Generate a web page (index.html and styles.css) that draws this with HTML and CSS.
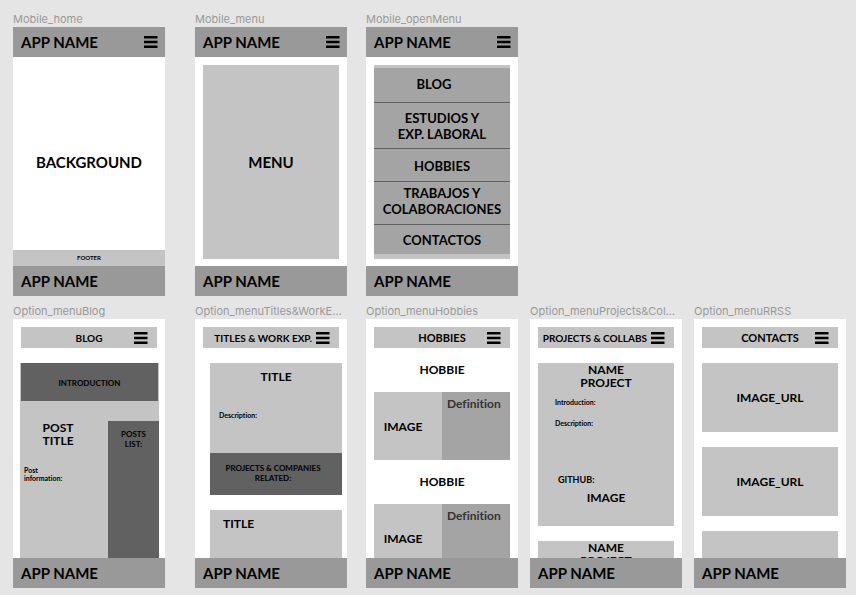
FILE: index.html
```html
<!DOCTYPE html>
<html lang="es">
<head>
<meta charset="utf-8">
<meta name="viewport" content="width=device-width, initial-scale=1">
<title>Mobile wireframes</title>
<link rel="stylesheet" href="styles.css">
</head>
<body>
<svg class="defs" aria-hidden="true">
  <symbol id="burger" viewBox="0 0 14 12"><path d="M0 0h13.5v2.4H0zM0 4.8h13.5v2.4H0zM0 9.6h13.5v2.4H0z"/></symbol>
</svg>
<main class="board">
  <section class="frame col-1">
    <h2 class="label">Mobile_home</h2>
    <div class="screen">
      <header class="app-bar"><span>APP NAME</span><button class="burger" aria-label="Menu"><svg><use href="#burger"/></svg></button></header>
      <div class="body home"><p class="text-xl">BACKGROUND</p></div>
      <div class="strip">FOOTER</div>
      <footer class="app-bar">APP NAME</footer>
    </div>
  </section>

  <section class="frame col-2">
    <h2 class="label">Mobile_menu</h2>
    <div class="screen">
      <header class="app-bar"><span>APP NAME</span><button class="burger" aria-label="Menu"><svg><use href="#burger"/></svg></button></header>
      <div class="body inset"><div class="panel center text-xl">MENU</div></div>
      <footer class="app-bar">APP NAME</footer>
    </div>
  </section>

  <section class="frame col-3">
    <h2 class="label">Mobile_openMenu</h2>
    <div class="screen">
      <header class="app-bar"><span>APP NAME</span><button class="burger" aria-label="Menu"><svg><use href="#burger"/></svg></button></header>
      <div class="body inset">
        <nav class="panel menu">
          <a class="blog" href="#blog">BLOG</a>
          <a class="studies" href="#titles">ESTUDIOS Y<br>EXP. LABORAL</a>
          <a class="hobbies" href="#hobbies">HOBBIES</a>
          <a class="works" href="#projects">TRABAJOS Y<br>COLABORACIONES</a>
          <a class="contacts" href="#contacts">CONTACTOS</a>
        </nav>
      </div>
      <footer class="app-bar">APP NAME</footer>
    </div>
  </section>

  <section class="frame col-1" id="blog">
    <h2 class="label">Option_menuBlog</h2>
    <div class="screen">
      <header class="title-bar"><h3 class="text-s">BLOG</h3><button class="burger" aria-label="Menu"><svg><use href="#burger"/></svg></button></header>
      <div class="body blog-body">
        <div class="intro text-xs">INTRODUCTION</div>
        <div class="blog-columns">
          <article class="post">
            <h4 class="text-m">POST<br>TITLE</h4>
            <p class="text-xxs">Post<br>information:</p>
          </article>
          <aside class="posts text-xs">POSTS<br>LIST:</aside>
        </div>
      </div>
      <footer class="app-bar">APP NAME</footer>
    </div>
  </section>

  <section class="frame col-2" id="titles">
    <h2 class="label">Option_menuTitles&amp;WorkExp</h2>
    <div class="screen">
      <header class="title-bar"><h3 class="text-s">TITLES &amp; WORK EXP.</h3><button class="burger" aria-label="Menu"><svg><use href="#burger"/></svg></button></header>
      <div class="body titles-body">
        <article class="title-card">
          <h4 class="text-m">TITLE</h4>
          <p class="text-xxs">Description:</p>
          <div class="related text-xs">PROJECTS &amp; COMPANIES<br>RELATED:</div>
        </article>
        <article class="title-card next"><h4 class="text-m">TITLE</h4></article>
      </div>
      <footer class="app-bar">APP NAME</footer>
    </div>
  </section>

  <section class="frame col-3" id="hobbies">
    <h2 class="label">Option_menuHobbies</h2>
    <div class="screen">
      <header class="title-bar"><h3 class="text-sm">HOBBIES</h3><button class="burger" aria-label="Menu"><svg><use href="#burger"/></svg></button></header>
      <div class="body hobbies-body">
        <h4 class="hobby-name text-m">HOBBIE</h4>
        <div class="hobby text-m"><div class="image">IMAGE</div><p class="definition">Definition</p></div>
        <h4 class="hobby-name text-m">HOBBIE</h4>
        <div class="hobby text-m"><div class="image">IMAGE</div><p class="definition">Definition</p></div>
      </div>
      <footer class="app-bar">APP NAME</footer>
    </div>
  </section>

  <section class="frame col-4" id="projects">
    <h2 class="label">Option_menuProjects&amp;Collabs</h2>
    <div class="screen">
      <header class="title-bar"><h3 class="text-s">PROJECTS &amp; COLLABS</h3><button class="burger" aria-label="Menu"><svg><use href="#burger"/></svg></button></header>
      <div class="body cards">
        <article class="project">
          <h4 class="text-m">NAME<br>PROJECT</h4>
          <p class="text-xxs">Introduction:</p>
          <p class="text-xxs">Description:</p>
          <p class="github">GITHUB:</p>
          <div class="project-image text-m">IMAGE</div>
        </article>
        <article class="project"><h4 class="text-m">NAME<br>PROJECT</h4></article>
      </div>
      <footer class="app-bar">APP NAME</footer>
    </div>
  </section>

  <section class="frame col-5" id="contacts">
    <h2 class="label">Option_menuRRSS</h2>
    <div class="screen">
      <header class="title-bar"><h3 class="text-sm">CONTACTS</h3><button class="burger" aria-label="Menu"><svg><use href="#burger"/></svg></button></header>
      <div class="body cards">
        <div class="contact text-m">IMAGE_URL</div>
        <div class="contact text-m">IMAGE_URL</div>
        <div class="contact"></div>
      </div>
      <footer class="app-bar">APP NAME</footer>
    </div>
  </section>
</main>
</body>
</html>
```
FILE: styles.css
```css
* { box-sizing: border-box; }

body {
  margin: 0;
  background: #e5e5e5;
  color: #000;
  font-family: Lato, "Liberation Sans", sans-serif;
  font-weight: 700;
  font-variant-ligatures: none;
}

h2, h3, h4, p { margin: 0; font-weight: inherit; }

.defs { display: none; }

/* Type scale */
.text-xl { font-size: 15px; line-height: 20px; }
.text-m { font-size: 12px; line-height: 13px; }
.text-sm { font-size: 11px; line-height: 14px; }
.text-s { font-size: 10px; line-height: 14px; }
.text-xs { font-size: 8px; line-height: 10px; }
.text-xxs { font-size: 7px; line-height: 8px; }

/* Board */
.board {
  display: grid;
  grid-template-columns: 152fr 30fr 152fr 19fr 152fr 12fr 152fr 12fr 152fr;
  row-gap: 7px;
  padding: 11px 10px 7px 13px;
}
.frame { min-width: 0; }
.col-1 { grid-column: 1; }
.col-2 { grid-column: 3; }
.col-3 { grid-column: 5; }
.col-4 { grid-column: 7; }
.col-5 { grid-column: 9; }

.label {
  overflow: hidden;
  padding-right: 5px;
  color: #999;
  font: 400 11px/16px Inter, sans-serif;
  text-overflow: ellipsis;
  white-space: nowrap;
}

.screen {
  display: flex;
  flex-direction: column;
  aspect-ratio: 152 / 269;
  overflow: hidden;
  background: #fff;
}
.body { flex: 1; min-height: 0; overflow: hidden; }

.app-bar {
  display: flex;
  flex: none;
  align-items: center;
  justify-content: space-between;
  height: 30px;
  padding: 0 7px 0 8px;
  background: #999;
  font-size: 15px;
  line-height: 20px;
}

.burger {
  display: block;
  width: 14px;
  height: 12px;
  padding: 0;
  border: 0;
  background: none;
}
.burger svg { display: block; width: 14px; height: 12px; }

.title-bar {
  display: grid;
  flex: none;
  grid-template-columns: minmax(0, 1fr) auto minmax(27px, 1fr);
  align-items: center;
  height: 21px;
  margin: 8px 8px 15px;
  background: #c4c4c4;
  white-space: nowrap;
}
.title-bar h3 { grid-column: 2; }
.title-bar .burger { justify-self: end; margin-right: 9px; }

/* Home and menu */
.home {
  display: grid;
  place-items: center;
  padding-top: 16px;
}
.strip {
  flex: none;
  height: 16px;
  background: #c4c4c4;
  font-size: 6px;
  line-height: 16px;
  text-align: center;
}
.inset { display: grid; padding: 8px 8px 7px; }
.panel { background: #c4c4c4; }
.center { display: grid; place-items: center; }

.menu {
  display: grid;
  grid-template-rows: 35fr 46fr 33fr 43fr 29fr;
  padding: 3px 0 5px;
  font-size: 13px;
  line-height: 16px;
}
.menu a {
  display: grid;
  place-items: center;
  border-bottom: 1px solid #616161;
  background: #a4a4a4;
  color: inherit;
  text-align: center;
  text-decoration: none;
}
.menu a:last-child { border-bottom: 0; }
.menu .blog { padding: 0 16px 2px 0; }
.menu .hobbies { padding-top: 2px; }
.menu .works { padding-bottom: 4px; }

/* Blog */
.blog-body {
  display: flex;
  flex-direction: column;
  margin: 0 6px 0 7px;
  background: #c4c4c4;
}
.intro {
  display: grid;
  flex: none;
  place-items: center;
  height: 38px;
  margin: 0 1px;
  padding-top: 2px;
  background: #616161;
}
.blog-columns {
  display: grid;
  flex: 1;
  grid-template-columns: 88fr 51fr;
  padding-top: 20px;
}
.post h4 { padding-right: 12px; text-align: center; }
.post p { padding: 19px 0 0 4px; }
.posts { padding-top: 8px; background: #616161; text-align: center; }

/* Titles */
.titles-body { padding: 0 5px 0 15px; }
.title-card { margin-bottom: 15px; background: #c4c4c4; }
.title-card h4 { padding-top: 7px; text-align: center; }
.title-card p { padding: 28px 9px 34px; }
.related {
  padding: 10px 6px 12px 0;
  background: #616161;
  text-align: center;
}
.next { padding: 0 0 60px 13px; }
.next h4 { text-align: left; }

/* Hobbies */
.hobbies-body { padding: 0 8px; }
.hobby-name { padding-bottom: 16px; text-align: center; }
.hobby {
  display: grid;
  grid-template-columns: 1fr 1fr;
  height: 68px;
  margin-bottom: 15px;
}
.image {
  display: grid;
  place-items: center;
  padding-right: 10px;
  background: #c4c4c4;
}
.definition { padding: 5px; background: #a4a4a4; color: #333; }

/* Projects and contacts */
.cards { padding: 0 8px; }
.project {
  height: 163px;
  margin-bottom: 15px;
  background: #c4c4c4;
}
.project h4 { padding-bottom: 9px; text-align: center; }
.project p { padding: 0 17px 13px; }
.project .github { padding: 35px 20px 6px; font-size: 9px; line-height: 10px; }
.project-image { text-align: center; }
.contact {
  display: grid;
  place-items: center;
  height: 69px;
  margin-bottom: 15px;
  background: #c4c4c4;
}
```
